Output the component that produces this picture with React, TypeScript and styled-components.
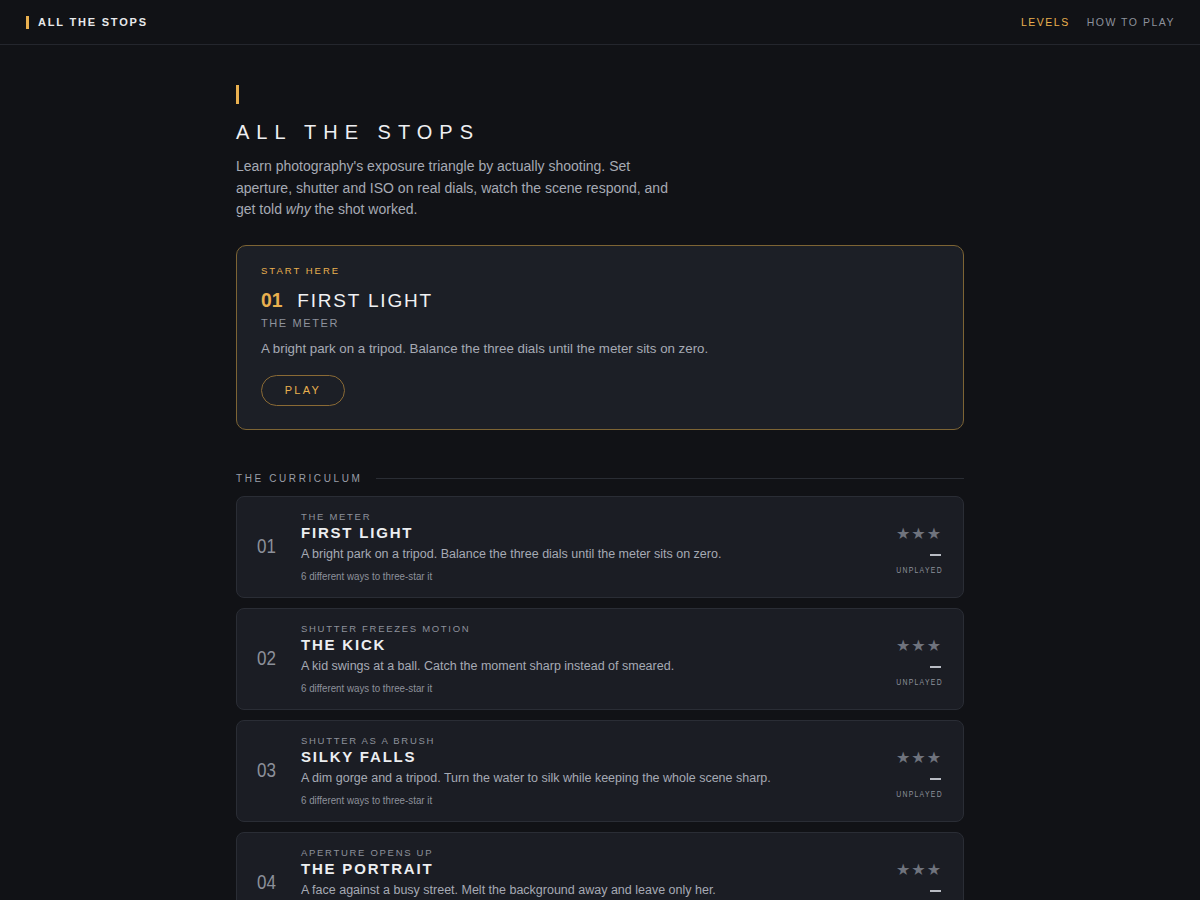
import React from "react";
import styled, { createGlobalStyle } from "styled-components";

const Global = createGlobalStyle`
  html, body { margin: 0; padding: 0; background: #111216; }
  body { font-family: "Liberation Sans", Arial, sans-serif; color: #e6e7ea; -webkit-font-smoothing: antialiased; }
  * { box-sizing: border-box; }
`;

const ACCENT = "#e9b04f";

const Header = styled.header`
  height: 45px;
  border-bottom: 1px solid #24262d;
  display: flex;
  align-items: center;
  justify-content: space-between;
  padding: 0 25px 0 26px;
`;

const Brand = styled.div`
  display: flex;
  align-items: center;
  gap: 9px;
  font-size: 11px;
  font-weight: 700;
  letter-spacing: 1.8px;
  color: #e8e9ec;
`;

const Bar = styled.span<{ $h: number }>`
  display: block;
  width: 3px;
  height: ${(p) => p.$h}px;
  background: ${ACCENT};
`;

const Nav = styled.nav`
  display: flex;
  gap: 17px;
`;

const NavLink = styled.a<{ $active?: boolean }>`
  font-size: 10.5px;
  letter-spacing: 1.5px;
  color: ${(p) => (p.$active ? ACCENT : "#8d919b")};
  text-decoration: none;
`;

const Main = styled.main`
  width: 728px;
  margin: 0 auto;
  padding-top: 40px;
`;

const Title = styled.h1`
  margin: 18px 0 0;
  font-size: 20px;
  font-weight: 400;
  letter-spacing: 7px;
  color: #eeeff2;
  line-height: 1;
`;

const Lead = styled.p`
  margin: 14px 0 0;
  max-width: 440px;
  font-size: 14px;
  line-height: 21.5px;
  color: #a6aab4;
  em { font-style: italic; }
`;

const Featured = styled.section`
  margin-top: 24px;
  border: 1px solid #7d6434;
  border-radius: 10px;
  background: #1c1f26;
  padding: 19px 24px 23px;
`;

const Eyebrow = styled.div`
  font-size: 9.5px;
  letter-spacing: 2px;
  color: ${ACCENT};
`;

const FeatTitleRow = styled.div`
  margin-top: 12px;
  display: flex;
  align-items: baseline;
  gap: 13px;
`;

const Condensed = styled.span<{ $scale: number; $origin?: string }>`
  display: inline-block;
  transform: scaleX(${(p) => p.$scale});
  transform-origin: ${(p) => p.$origin || "left"} center;
`;

const FeatNum = styled(Condensed)`
  font-size: 21px;
  font-weight: 700;
  color: ${ACCENT};
`;

const FeatName = styled.h2`
  margin: 0;
  font-size: 19px;
  font-weight: 400;
  letter-spacing: 1.8px;
  color: #f0f1f3;
`;

const Sub = styled.div`
  margin-top: 5px;
  font-size: 11px;
  letter-spacing: 1.6px;
  color: #8f939d;
`;

const FeatDesc = styled.p`
  margin: 12px 0 0;
  font-size: 13.3px;
  color: #a6aab4;
`;

const PlayButton = styled.button`
  margin-top: 19px;
  width: 84px;
  height: 31px;
  border-radius: 16px;
  border: 1px solid #8a6a35;
  background: transparent;
  color: ${ACCENT};
  font-family: inherit;
  font-size: 11px;
  letter-spacing: 2.3px;
  cursor: pointer;
`;

const SectionHead = styled.div`
  margin-top: 43px;
  display: flex;
  align-items: center;
  gap: 14px;
  font-size: 10px;
  letter-spacing: 2.6px;
  color: #9a9ea8;
  &::after {
    content: "";
    flex: 1;
    height: 1px;
    background: #2a2d34;
  }
`;

const List = styled.div`
  margin-top: 12px;
  display: flex;
  flex-direction: column;
  gap: 10px;
`;

const Row = styled.article`
  height: 102px;
  border: 1px solid #2a2d35;
  border-radius: 8px;
  background: #1b1d24;
  display: grid;
  grid-template-columns: 44px 1fr auto;
  align-items: center;
  padding: 0 22px 0 20px;
`;

const RowNum = styled(Condensed)`
  font-size: 20px;
  color: #8c909a;
`;

const RowBody = styled.div`
  display: flex;
  flex-direction: column;
  align-items: flex-start;
`;

const Kicker = styled.div`
  font-size: 9.5px;
  letter-spacing: 1.7px;
  color: #8d919b;
`;

const RowTitle = styled.h3`
  margin: 2px 0 0;
  font-size: 15px;
  font-weight: 700;
  letter-spacing: 1.8px;
  color: #eceef1;
`;

const RowDesc = styled.p`
  margin: 6px 0 0;
  font-size: 12.5px;
  color: #a6aab4;
`;

const Meta = styled(Condensed)`
  margin-top: 9px;
  font-size: 10.5px;
  color: #8d919b;
`;

const Status = styled.div`
  display: flex;
  flex-direction: column;
  align-items: flex-end;
  padding-top: 6px;
`;

const Stars = styled.div`
  font-family: "DejaVu Sans", sans-serif;
  font-size: 16px;
  line-height: 18px;
  letter-spacing: 1px;
  margin-right: -1px;
  color: #6f737d;
`;

const Dash = styled.div`
  margin-top: 11px;
  width: 11px;
  height: 2px;
  background: #b9bcc4;
`;

const StatusLabel = styled(Condensed)`
  margin-top: 8px;
  font-size: 9.5px;
  letter-spacing: 1.8px;
  margin-right: -1.8px;
  color: #8d919b;
`;

const levels = [
  { n: "01", kicker: "THE METER", title: "FIRST LIGHT", desc: "A bright park on a tripod. Balance the three dials until the meter sits on zero." },
  { n: "02", kicker: "SHUTTER FREEZES MOTION", title: "THE KICK", desc: "A kid swings at a ball. Catch the moment sharp instead of smeared." },
  { n: "03", kicker: "SHUTTER AS A BRUSH", title: "SILKY FALLS", desc: "A dim gorge and a tripod. Turn the water to silk while keeping the whole scene sharp." },
  { n: "04", kicker: "APERTURE OPENS UP", title: "THE PORTRAIT", desc: "A face against a busy street. Melt the background away and leave only her." },
];

export default function App() {
  return (
    <>
      <Global />
      <Header>
        <Brand>
          <Bar $h={13} />
          ALL THE STOPS
        </Brand>
        <Nav>
          <NavLink $active href="#">LEVELS</NavLink>
          <NavLink href="#">HOW TO PLAY</NavLink>
        </Nav>
      </Header>
      <Main>
        <Bar $h={19} />
        <Title>ALL THE STOPS</Title>
        <Lead>
          Learn photography's exposure triangle by actually shooting. Set aperture, shutter and ISO on real dials, watch the scene respond, and get told <em>why</em> the shot worked.
        </Lead>
        <Featured>
          <Eyebrow>START HERE</Eyebrow>
          <FeatTitleRow>
            <FeatNum $scale={0.92}>01</FeatNum>
            <FeatName>FIRST LIGHT</FeatName>
          </FeatTitleRow>
          <Sub>THE METER</Sub>
          <FeatDesc>A bright park on a tripod. Balance the three dials until the meter sits on zero.</FeatDesc>
          <PlayButton>PLAY</PlayButton>
        </Featured>
        <SectionHead>THE CURRICULUM</SectionHead>
        <List>
          {levels.map((l) => (
            <Row key={l.n}>
              <RowNum $scale={0.85}>{l.n}</RowNum>
              <RowBody>
                <Kicker>{l.kicker}</Kicker>
                <RowTitle>{l.title}</RowTitle>
                <RowDesc>{l.desc}</RowDesc>
                <Meta $scale={0.93}>6 different ways to three-star it</Meta>
              </RowBody>
              <Status>
                <Stars>★★★</Stars>
                <Dash />
                <StatusLabel $scale={0.72} $origin="right">UNPLAYED</StatusLabel>
              </Status>
            </Row>
          ))}
        </List>
      </Main>
    </>
  );
}
